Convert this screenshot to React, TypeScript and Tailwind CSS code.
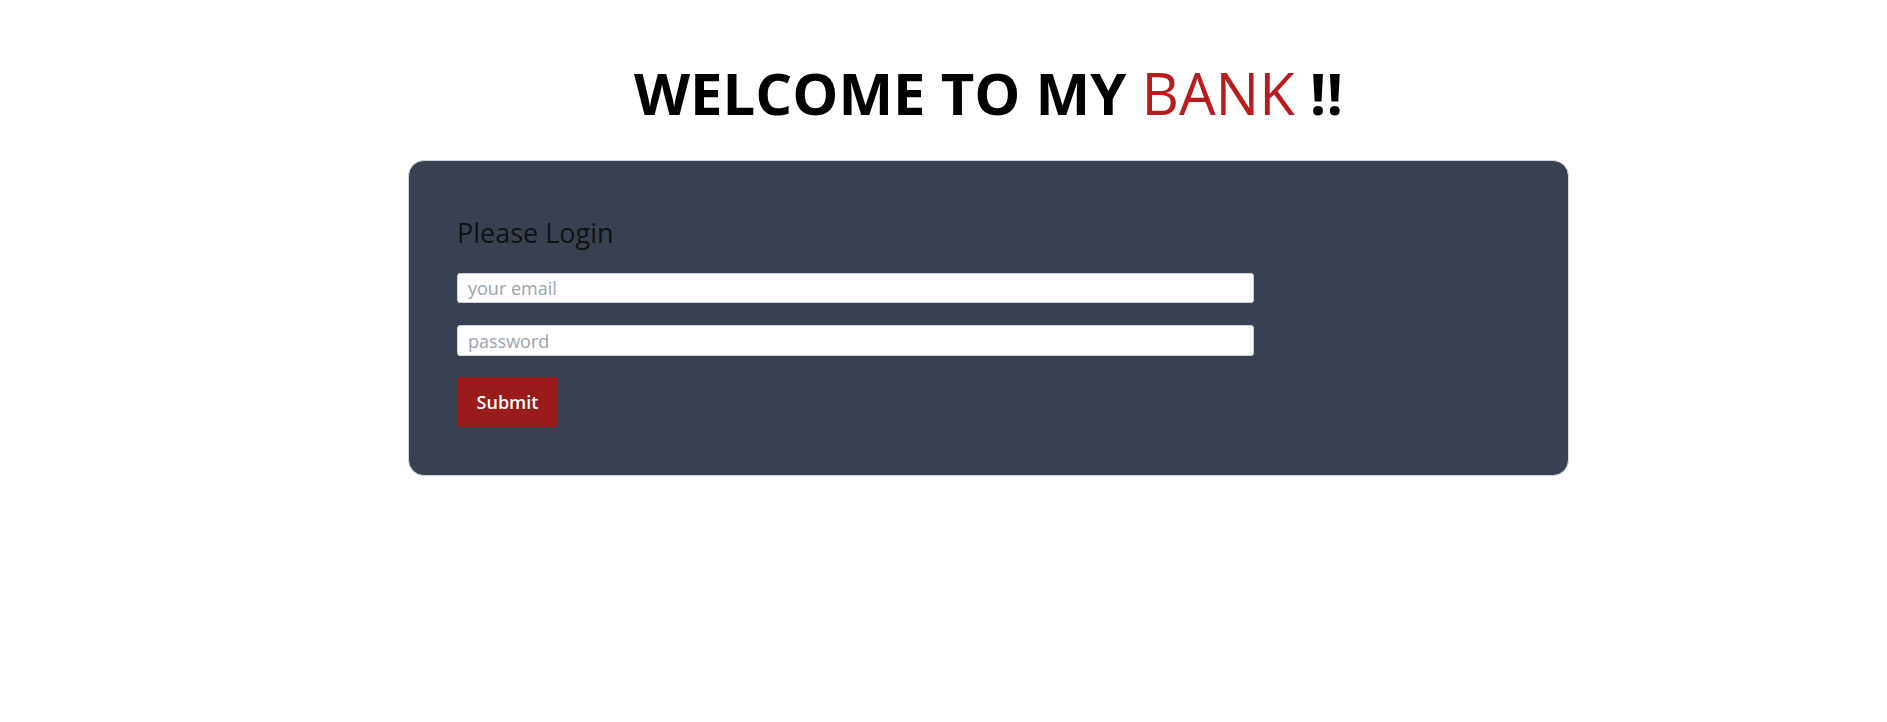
const LoginCard = () => (
  <form className="flex w-[1161px] flex-col rounded-2xl border border-[#d4d7dc] bg-[#374151] px-12 pb-[48px] pt-[54px]">
    <h2 className="mb-[22px] text-[27px] leading-9 text-[#111111]">Please Login</h2>
    <input
      type="email"
      placeholder="your email"
      className="h-[30px] w-3/4 rounded-[3px] border border-[#cfd3da] bg-white px-2.5 text-[18px] text-gray-800 outline-none placeholder:text-[#9ca3af]"
    />
    <input
      type="password"
      placeholder="password"
      className="mt-[22px] h-[31px] w-3/4 rounded-[3px] border border-[#cfd3da] bg-white px-2.5 text-[18px] text-gray-800 outline-none placeholder:text-[#9ca3af]"
    />
    <div className="mt-[21px]">
      <button
        type="button"
        className="h-[50px] w-[101px] rounded-[3px] bg-[#991b1b] text-[18px] font-semibold text-white"
      >
        Submit
      </button>
    </div>
  </form>
);

const App = () => (
  <div
    className="min-h-[722px] bg-white pl-[90px]"
    style={{ fontFamily: '"Open Sans", "Noto Sans", sans-serif' }}
  >
    <div className="flex flex-col items-center pt-[64px]">
      <h1 className="text-[58px] font-bold leading-none text-black">
        WELCOME TO MY <span className="font-normal text-[#b91c1c]">BANK</span> !!
      </h1>
      <div className="mt-[38px]">
        <LoginCard />
      </div>
    </div>
  </div>
);

export default App;
